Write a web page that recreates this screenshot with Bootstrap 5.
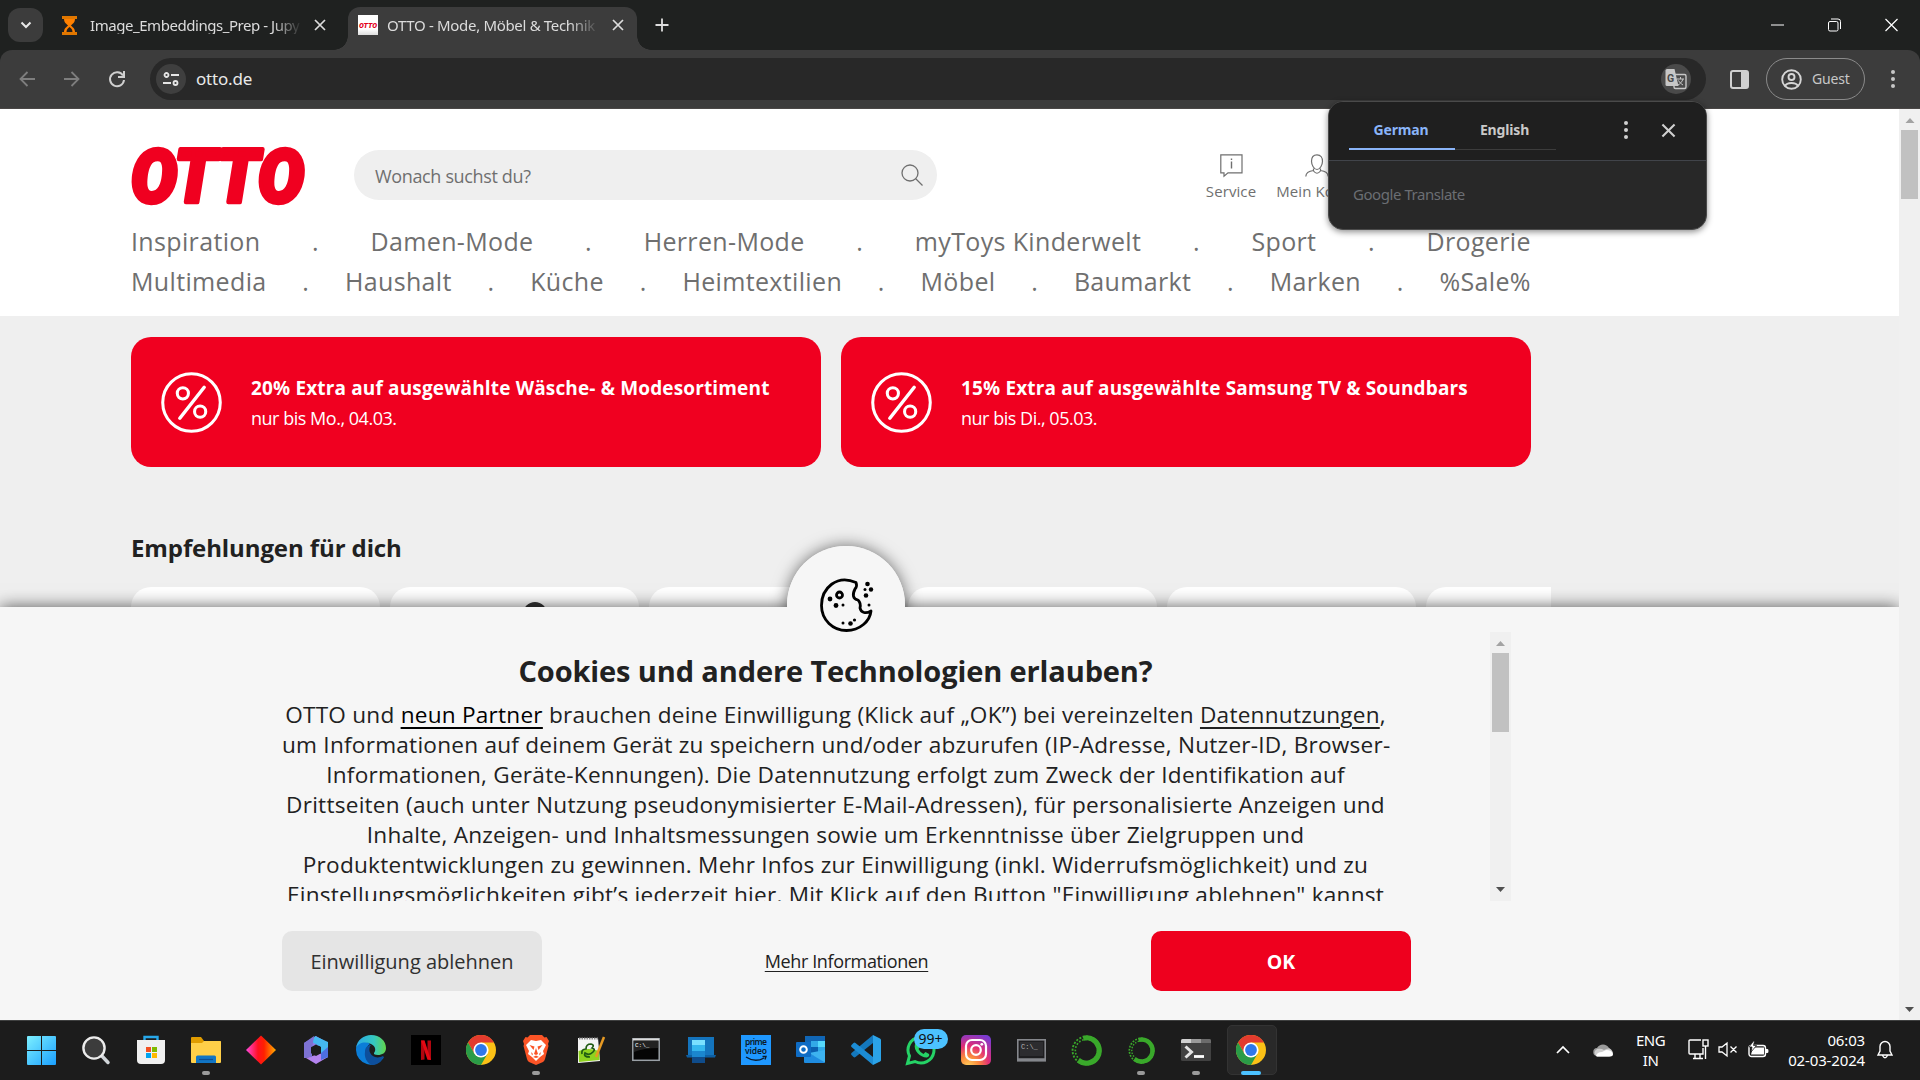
<!DOCTYPE html>
<html lang="de">
<head>
<meta charset="utf-8">
<title>OTTO - Mode, Möbel &amp; Technik</title>
<link href="https://cdn.jsdelivr.net/npm/bootstrap@5.3.0/dist/css/bootstrap.min.css" rel="stylesheet">
<style>
body{width:1920px;height:1080px;overflow:hidden;font-family:"Open Sans","Noto Sans",sans-serif;background:#efefef;color:#212121;line-height:1.2}
svg{display:block;flex:none;overflow:visible}
.ui{font-family:"Noto Sans","Open Sans",sans-serif}
/* browser frame */
.tabstrip{height:50px;background:#1f2120;padding-left:8px;color:#dcdcdc}
.tabsearch{width:35px;height:34px;border-radius:12px;background:#3c3c3c}
.tab-item{font-size:15px;letter-spacing:-.45px;white-space:nowrap}
.tab-idle{width:305px;padding:0 21px 0 18px}
.tab-idle .tab-title{margin-left:12px}
.tab-active{width:289px;height:43px;background:#3c3c3c;border-radius:12px 12px 0 0;align-self:flex-end;padding-left:10px}
.tab-active::before,.tab-active::after{content:"";position:absolute;bottom:0;width:14px;height:14px}
.tab-active::before{left:-14px;background:radial-gradient(circle at 0 0,transparent 13.5px,#3c3c3c 14px)}
.tab-active::after{right:-14px;background:radial-gradient(circle at 100% 0,transparent 13.5px,#3c3c3c 14px)}
.tab-title{width:212px;-webkit-mask-image:linear-gradient(90deg,#000 86%,transparent)}
.tab-active .tab-title{margin-left:9px;letter-spacing:-.32px}
.favicon{width:20px;height:20px;background:linear-gradient(#fff 70%,#ddd);flex:none}
.win-ctl{gap:44px;padding-right:22px}
.toolbar-wrap{height:59px;background:#1f2120}
.toolbar-row{height:59px;background:#3c3c3c;border-radius:12px 12px 0 0;border-bottom:1px solid #4a4746;padding:0 20px 0 18px;color:#c7c7c7}
.omnibox{width:1556px;height:42px;border-radius:21px;background:#282828;margin-left:24px;padding:0 15px 0 6px;font-size:17px;letter-spacing:-.2px;color:#e8e8e8}
.round-btn{width:30px;height:30px;border-radius:50%;background:#3f3f3f}
.guest{width:99px;height:42px;border:1px solid #8b8b8b;border-radius:21px;margin-left:17px;padding-left:14px;font-size:14px;letter-spacing:-.2px;gap:10px}
/* page */
.viewport{height:911px}
.site{width:1899px;height:911px;overflow:hidden}
.site-head{height:207px;background:#fff;color:#6f6f6f}
.wrap{width:1400px;margin-left:131px}
.head-top{height:105px;padding-top:37px}
.search-pill{width:583px;height:50px;border-radius:25px;background:#efefef;margin:4px 0 0 49px;padding:0 14px 0 21px;font-size:18px;letter-spacing:-.35px;color:#6f6f6f}
.head-links{margin-left:261px;font-size:15px;letter-spacing:.1px;gap:20px;padding-top:8px}
.head-link{width:66px;white-space:nowrap;text-align:center}
.nav-line{height:40px;font-size:25px;letter-spacing:.35px}
.promo{width:690px;height:130px;border-radius:20px;background:#f00020;color:#fff;padding-left:30px}
.promo-text{margin-left:29px;padding-top:1px}
.promo-title{font-size:19px;font-weight:700;letter-spacing:.15px;line-height:30px}
.promo-sub{font-size:18px;letter-spacing:-.48px;line-height:30px}
.reco-title{font-size:24px;font-weight:700;letter-spacing:-.1px;margin:65px 0 0;line-height:32px}
.reco-row{width:1420px;gap:10px;margin-top:23px;overflow:hidden}
.tile{width:249px;height:80px;border-radius:20px;background:#fff;flex:none}
.hat{position:absolute;left:133px;top:15px;width:24px;height:24px;border-radius:50%;background:#333}
.scroll-track{width:21px;background:#f0f0f0}
.scroll-thumb{width:17px;background:#c1c1c1}
/* consent layer */
.consent{position:absolute;left:0;top:498px;width:1899px;height:413px}
.consent-shade,.consent-face{position:absolute;inset:0}
.consent-shade{box-shadow:0 0 16px rgba(0,0,0,.65)}
.consent-face{background:#f6f6f6}
.bump{position:absolute;left:787px;top:-61px;width:118px;height:118px;border-radius:50%;background:#f6f6f6}
.bump-shade{box-shadow:0 0 16px rgba(0,0,0,.55)}
.consent-body{height:269px;margin:25px 0 0 282px;width:1229px;overflow:hidden}
.consent-text{width:1107px;font-size:22.6px;letter-spacing:.24px;line-height:30px;white-space:nowrap}
.consent-text h2{font-size:29px;font-weight:700;letter-spacing:-.12px;line-height:40px;margin:19px 0 9px}
.consent-text p{margin:0}
.consent-text a,.more-link{color:inherit;text-decoration:underline;text-underline-offset:4px;text-decoration-thickness:2px}
.consent-text a.partner{color:#000}
.consent-actions{width:1129px;margin:30px 0 0 282px}
.act{width:260px;height:60px;border:0;border-radius:10px;font-size:20px;padding-top:3px}
.act-no{background:#e5e5e5;color:#303030}
.act-ok{background:#ee001e;color:#fff;font-weight:700;font-size:19.5px}
.more-link{font-size:18px;letter-spacing:-.38px;text-decoration-thickness:1px;text-underline-offset:3px;padding-top:2px}
/* translate bubble */
.bubble{position:absolute;left:1328px;top:101px;width:379px;height:129px;border-radius:15px;background:#282828;border:1px solid #4a4a4a;color:#d0d0d0;overflow:hidden;box-shadow:0 2px 6px rgba(0,0,0,.45);z-index:5}
.bubble-head{height:59px;background:#1f1f1f;border-bottom:1px solid #41444a;padding-left:20px}
.lang{height:48px;font-size:14px;font-weight:700;letter-spacing:-.15px;color:#c9c9c9;border-bottom:1px solid #3c3c3c;padding:10px 2px 0 0}
.lang-on{color:#8ab4f8;border-bottom:2px solid #8ab4f8}
.gt{font-size:15px;letter-spacing:-.45px;color:#6b6e73;padding:24px 0 0 24px}
/* taskbar */
.taskbar{height:60px;background:#1c1c1c;border-top:1px solid #3f4040;padding-left:13.500px;color:#fff}
.app{width:55px;height:59px;position:relative;padding-bottom:1px}
.app::after{position:absolute;bottom:5px;left:50%;margin-left:-4px;width:8px;height:4px;border-radius:2px;background:#9a9a9a}
.app-run::after{content:""}
.app-on::before{content:"";position:absolute;inset:4px 2px 5px 3px;border-radius:5px;background:#292929;border:1px solid #333}
.app-on svg{position:relative}
.app-on::after{content:"";width:20px;margin-left:-10px;background:#4cc2ff}
.unread{position:absolute;left:20px;top:8px;width:34px;height:20px;border-radius:10px;background:#4cc2ff;color:#111;font-size:14px;line-height:20px;text-align:center}
.tray{font-size:15px;letter-spacing:-.15px;line-height:20px;padding:0 27px 2px 0}
</style>
<script src="https://cdn.jsdelivr.net/npm/bootstrap@5.3.0/dist/js/bootstrap.bundle.min.js"></script>
</head>
<body>
<svg width="0" height="0" class="position-absolute">
  <symbol id="x" viewBox="0 0 14 14"><path d="M2 2l10 10M12 2L2 12" stroke="currentColor" stroke-width="1.7" fill="none"/></symbol>
  <symbol id="dots" viewBox="0 0 6 20"><g fill="currentColor"><circle cx="3" cy="3" r="2"/><circle cx="3" cy="10" r="2"/><circle cx="3" cy="17" r="2"/></g></symbol>
  <symbol id="chrome" viewBox="0 0 30 30"><circle cx="15" cy="15" r="15" fill="#fbc116"/><path d="M2 7.5A15 15 0 0 1 28 7.5H15L8.5 18.7z" fill="#e33b2e"/><path d="M2 7.5A15 15 0 0 0 15 30l6.5-11.2L15 22l-6.5-3.3z" fill="#2a9c47"/><circle cx="15" cy="15" r="7.6" fill="#fff"/><circle cx="15" cy="15" r="5.9" fill="#2f78ea"/></symbol>
  <symbol id="percent" viewBox="0 0 60 60"><g fill="none" stroke="#fff" stroke-width="3"><circle cx="30" cy="30" r="28.3"/><path d="M42.5 15L18.500 45.500" stroke-width="3.400" stroke-linecap="round"/><circle cx="21.500" cy="21" r="5.500"/><circle cx="38.500" cy="39" r="5.500"/></g></symbol>
  <symbol id="ring" viewBox="0 0 30 30"><circle cx="15" cy="15" r="12.300" fill="none" stroke="#3aa92b" stroke-width="5" stroke-dasharray="50 28" transform="rotate(-105 15 15)"/><circle cx="15" cy="15" r="13.500" fill="none" stroke="#3aa92b" stroke-width="1.800" stroke-dasharray="2 1.500"/><circle cx="15" cy="15" r="10.800" fill="none" stroke="#3aa92b" stroke-width="1.600" stroke-dasharray="1.600 1.700"/></symbol>
</svg>

<header class="ui">
  <div class="tabstrip d-flex align-items-center">
    <div class="tabsearch d-flex align-items-center justify-content-center"><svg width="12" height="12" viewBox="0 0 12 12"><path d="M1.500 3.500L6 8l4.500-4.500" stroke="#e8e8e8" stroke-width="2" fill="none"/></svg></div>
    <div class="tab-item tab-idle d-flex align-items-center">
      <svg width="17" height="19" viewBox="0 0 17 19"><path d="M1 0h15v3H1zM1 16h15v3H1z" fill="#e07700"/><path d="M3 3h11c0 4-3 5-4 6.500C11 11 14 12 14 16H3c0-4 3-5 4-6.500C6 8 3 7 3 3z" fill="#ff8000"/><path d="M5.500 16c0-3 2-4 3-5 1 1 3 2 3 5z" fill="#26201a"/></svg>
      <span class="tab-title">Image_Embeddings_Prep - Jupy</span>
      <svg class="ms-auto" width="14" height="14"><use href="#x"/></svg>
    </div>
    <div class="tab-item tab-active position-relative d-flex align-items-center pb-2">
      <div class="favicon"><svg width="20" height="20" viewBox="0 0 20 20"><text x="1" y="13" font-family="Roboto" font-weight="900" font-style="italic" font-size="8" textLength="18" lengthAdjust="spacingAndGlyphs" fill="#e3001b" letter-spacing="0">OTTO</text></svg></div>
      <span class="tab-title">OTTO - Mode, Möbel &amp; Technik</span>
      <svg class="ms-auto me-2" width="14" height="14"><use href="#x"/></svg>
      <span class="pe-1"></span>
    </div>
    <svg class="ms-3" width="18" height="18" viewBox="0 0 18 18"><path d="M9 2.500v13M2.500 9h13" stroke="#ddd" stroke-width="1.800"/></svg>
    <div class="win-ctl d-flex align-items-center ms-auto">
      <svg width="13" height="14" viewBox="0 0 13 14"><path d="M0 7h13" stroke="#fff"/></svg>
      <svg width="13" height="14" viewBox="0 0 13 14" fill="none" stroke="#fff"><rect x=".5" y="3.500" width="9.500" height="9.500" rx="1.500"/><path d="M3 1h7q2.500 0 2.500 2.500V11"/></svg>
      <svg width="13" height="14" viewBox="0 0 13 14"><path d="M.5 1l12 12M12.500 1L.5 13" stroke="#fff" stroke-width="1.200"/></svg>
    </div>
  </div>
  <div class="toolbar-wrap">
    <div class="toolbar-row d-flex align-items-center">
      <svg width="18" height="18" viewBox="0 0 18 18" fill="none" stroke="#7e7e7e" stroke-width="1.800"><path d="M17 9H3M9.500 2L2.500 9l7 7"/></svg>
      <svg style="margin-left:27px" width="18" height="18" viewBox="0 0 18 18" fill="none" stroke="#7e7e7e" stroke-width="1.800"><path d="M1 9h14M8.500 2l7 7-7 7"/></svg>
      <svg style="margin-left:27px" width="18" height="18" viewBox="0 0 18 18" fill="none" stroke="#d0d0d0" stroke-width="2"><path d="M15 5.500A7 7 0 1 0 16 10"/><path d="M16 1v6h-6" /></svg>
      <div class="omnibox d-flex align-items-center">
        <div class="round-btn d-flex align-items-center justify-content-center"><svg width="16" height="14" viewBox="0 0 16 14" fill="none" stroke="#e6e6e6" stroke-width="1.800"><circle cx="3.500" cy="3" r="2"/><path d="M8 3h8M0 11h8"/><circle cx="12.500" cy="11" r="2"/></svg></div>
        <span style="margin-left:10px;padding-top:1px">otto.de</span>
        <div class="round-btn d-flex align-items-center justify-content-center ms-auto" style="background:#4a4a4a"><svg width="22" height="22" viewBox="0 0 22 22"><rect x="9" y="6.500" width="12" height="14" rx="1.500" fill="#4a4a4a" stroke="#c7c7c7" stroke-width="1.400"/><path d="M12 11h7M15.500 9v2M18 11c-1 3-3 5-5 6M13.500 12.500c1 2 3 3.500 4.500 4.500" stroke="#c7c7c7" fill="none"/><path d="M2 1h7.500l4 17H2Q.5 18 .5 16.500v-14Q.5 1 2 1z" fill="#c7c7c7"/><text x="2" y="14" font-size="10.500" font-weight="700" fill="#4a4a4a" font-family="Roboto">G</text></svg></div>
      </div>
      <svg style="margin-left:24px" width="19" height="19" viewBox="0 0 19 19"><rect x="1" y="1" width="17" height="17" rx="2" fill="none" stroke="#d0d0d0" stroke-width="2"/><path d="M11 1h7v17h-7z" fill="#d0d0d0"/></svg>
      <div class="guest d-flex align-items-center">
        <svg width="21" height="21" viewBox="0 0 21 21" fill="none" stroke="#d5d5d5" stroke-width="1.900"><circle cx="10.500" cy="10.500" r="9.300"/><circle cx="10.500" cy="8" r="3"/><path d="M4 17c2-4 11-4 13 0"/></svg>
        <span>Guest</span>
      </div>
      <svg class="ms-auto me-1" width="6" height="20"><use href="#dots"/></svg>
    </div>
  </div>
</header>

<section class="bubble ui">
  <div class="bubble-head d-flex">
    <div class="lang lang-on d-flex align-items-center justify-content-center" style="width:106px">German</div>
    <div class="lang d-flex align-items-center justify-content-center" style="width:101px">English</div>
    <svg style="margin:18px 0 0 67px" width="6" height="20"><use href="#dots"/></svg>
    <svg style="margin:20px 0 0 31px" width="17" height="17"><use href="#x"/></svg>
  </div>
  <div class="gt">Google Translate</div>
</section>

<main class="viewport d-flex position-relative">
  <div class="site position-relative">
    <div class="site-head">
      <div class="wrap">
        <div class="head-top d-flex align-items-start">
          <svg width="174" height="60" viewBox="0 0 174 60"><text x="0" y="56" font-family="Roboto" font-weight="900" font-style="italic" font-size="74" textLength="173" lengthAdjust="spacingAndGlyphs" fill="#f00020" stroke="#f00020" stroke-width="4.500" stroke-linejoin="round">OTTO</text></svg>
          <div class="search-pill d-flex align-items-center justify-content-between"><span class="pt-1">Wonach suchst du?</span>
            <svg width="22" height="22" viewBox="0 0 22 22" fill="none" stroke="#6f6f6f" stroke-width="1.300"><circle cx="9" cy="9" r="8"/><path d="M14.500 14.500l7 7"/></svg>
          </div>
          <div class="head-links d-flex">
            <div class="head-link d-flex flex-column align-items-center"><svg width="23" height="23" viewBox="0 0 23 23" fill="none" stroke="#6f6f6f"><path d="M.8.800h21.200v18H8l-4 3.500v-3.500H.8z" stroke-width="1.200"/><path d="M11.500 7.500v7M11.500 4.500v1.500" stroke-width="1.400"/></svg><span style="margin-top:5px">Service</span></div>
            <div class="head-link d-flex flex-column align-items-center"><svg width="24" height="23" viewBox="0 0 24 23" fill="none" stroke="#6f6f6f" stroke-width="1.200"><path d="M12 .8c-4 0-5.500 3-5.500 6.500S9 15.500 12 15.500s5.500-4.700 5.500-8.200S16 .8 12 .8z"/><path d="M8.500 14.500v2.500q3.500 4.500 7 0v-2.500M8.500 16.500C4 17 1 18.500.8 22.500M15.500 16.500c4.500.5 7.500 2 7.700 6"/></svg><span style="margin-top:5px">Mein Konto</span></div>
          </div>
        </div>
        <div class="nav-line d-flex align-items-center justify-content-between" style="margin-top:7px"><span>Inspiration</span><span>.</span><span>Damen-Mode</span><span>.</span><span>Herren-Mode</span><span>.</span><span>myToys Kinderwelt</span><span>.</span><span>Sport</span><span>.</span><span>Drogerie</span></div>
        <div class="nav-line d-flex align-items-center justify-content-between"><span>Multimedia</span><span>.</span><span>Haushalt</span><span>.</span><span>Küche</span><span>.</span><span>Heimtextilien</span><span>.</span><span>Möbel</span><span>.</span><span>Baumarkt</span><span>.</span><span>Marken</span><span>.</span><span>%Sale%</span></div>
      </div>
    </div>
    <div class="wrap">
      <div class="d-flex" style="gap:20px;padding-top:21px">
        <div class="promo d-flex align-items-center"><svg width="61" height="61"><use href="#percent"/></svg><div class="promo-text"><div class="promo-title">20% Extra auf ausgewählte Wäsche- &amp; Modesortiment</div><div class="promo-sub">nur bis Mo., 04.03.</div></div></div>
        <div class="promo d-flex align-items-center"><svg width="61" height="61"><use href="#percent"/></svg><div class="promo-text"><div class="promo-title">15% Extra auf ausgewählte Samsung TV &amp; Soundbars</div><div class="promo-sub">nur bis Di., 05.03.</div></div></div>
      </div>
      <h1 class="reco-title">Empfehlungen für dich</h1>
      <div class="reco-row d-flex"><div class="tile"></div><div class="tile position-relative"><div class="hat"></div></div><div class="tile"></div><div class="tile"></div><div class="tile"></div><div class="tile"></div></div>
    </div>
    <div class="consent">
      <div class="consent-shade"></div><div class="bump bump-shade"></div>
      <div class="consent-face"></div><div class="bump"></div>
      <svg class="position-absolute" style="left:819px;top:-30px" width="55" height="56" viewBox="0 0 55 56" fill="none" stroke="#000" stroke-width="2.800" stroke-linejoin="round" stroke-linecap="round"><path d="M37 5.500C18-3 2.500 11 2.500 28.500 2.500 43 14 53.500 27.500 53.500 41 53.500 51 44 52 34c-5 3-10 2-11-3 1-4 0-6-2-8-5-1-6-5-3-11 2-2 2-4 1-6.500z"/><circle cx="20.500" cy="18" r="3"/><g fill="#000" stroke="none"><circle cx="11" cy="22" r="2.400"/><circle cx="17" cy="28.500" r="2.400"/><circle cx="24" cy="28" r="1.500"/><circle cx="24" cy="46" r="1.500"/><circle cx="31.500" cy="46.500" r="2.300"/><circle cx="35.500" cy="43" r="1.600"/><circle cx="48.500" cy="7" r="2.300"/><circle cx="46" cy="12.500" r="1.500"/><circle cx="52" cy="12.500" r="2.200"/><circle cx="47" cy="18.500" r="2.300"/><circle cx="50" cy="28" r="1.500"/></g></svg>
      <div class="position-relative">
        <div class="consent-body d-flex justify-content-between">
          <div class="consent-text text-center">
            <h2>Cookies und andere Technologien erlauben?</h2>
            <p>OTTO und <a class="partner" href="#">neun Partner</a> brauchen deine Einwilligung (Klick auf „OK”) bei vereinzelten <a href="#">Datennutzungen</a>,<br>um Informationen auf deinem Gerät zu speichern und/oder abzurufen (IP-Adresse, Nutzer-ID, Browser-<br>Informationen, Geräte-Kennungen). Die Datennutzung erfolgt zum Zweck der Identifikation auf<br>Drittseiten (auch unter Nutzung pseudonymisierter E-Mail-Adressen), für personalisierte Anzeigen und<br>Inhalte, Anzeigen- und Inhaltsmessungen sowie um Erkenntnisse über Zielgruppen und<br>Produktentwicklungen zu gewinnen. Mehr Infos zur Einwilligung (inkl. Widerrufsmöglichkeit) und zu<br>Einstellungsmöglichkeiten gibt’s jederzeit hier. Mit Klick auf den Button "Einwilligung ablehnen" kannst</p>
          </div>
          <div class="scroll-track d-flex flex-column align-items-center"><svg class="mt-2" width="9" height="6" viewBox="0 0 9 6"><path d="M0 6l4.500-5L9 6z" fill="#a3a3a3"/></svg><div class="scroll-thumb" style="height:79px;margin-top:7px"></div><svg class="mt-auto mb-2" width="9" height="6" viewBox="0 0 9 6"><path d="M0 0l4.500 5L9 0z" fill="#505050"/></svg></div>
        </div>
        <div class="consent-actions d-flex justify-content-between align-items-center">
          <button class="act act-no">Einwilligung ablehnen</button><a class="more-link" href="#">Mehr Informationen</a><button class="act act-ok">OK</button>
        </div>
      </div>
    </div>
  </div>
  <div class="scroll-track d-flex flex-column align-items-center"><svg class="mt-2" width="10" height="6" viewBox="0 0 9 6"><path d="M0 6l4.500-5L9 6z" fill="#a3a3a3"/></svg><div class="scroll-thumb" style="height:69px;margin-top:7px"></div><svg class="mt-auto" style="margin-bottom:7px" width="9" height="6" viewBox="0 0 9 6"><path d="M0 0l4.500 5L9 0z" fill="#505050"/></svg></div>
</main>

<footer class="taskbar ui d-flex align-items-center">
  <div class="app d-flex align-items-center justify-content-center"><svg width="29" height="29" viewBox="0 0 29 29"><defs><linearGradient id="w" x2="1" y2="1"><stop stop-color="#7df0ff"/><stop offset="1" stop-color="#1a9fff"/></linearGradient></defs><path d="M0 1q0-1 1-1h13v14H0zM15 0h13q1 0 1 1v13H15zM0 15h14v14H1q-1 0-1-1zM15 15h14v13q0 1-1 1H15z" fill="url(#w)"/></svg></div>
  <div class="app d-flex align-items-center justify-content-center"><svg width="28" height="30" viewBox="0 0 28 30"><path d="M19 20l7 7.500" stroke="#d0d4d8" stroke-width="3.500" stroke-linecap="round"/><circle cx="12" cy="13" r="10.600" fill="#3c3c3c" stroke="#ececec" stroke-width="2.400"/></svg></div>
  <div class="app d-flex align-items-center justify-content-center"><svg width="30" height="30" viewBox="0 0 30 30"><path d="M8.500 6V2h13v4" fill="none" stroke="#27a8ea" stroke-width="2.400"/><path d="M1 5h28v20q0 4-4 4H5q-4 0-4-4z" fill="#f0f0f0"/><path d="M10 12h5v5h-5z" fill="#f25022"/><path d="M16 12h5v5h-5z" fill="#7fba00"/><path d="M10 18h5v5h-5z" fill="#00a4ef"/><path d="M16 18h5v5h-5z" fill="#ffb900"/></svg></div>
  <div class="app app-run d-flex align-items-center justify-content-center"><svg width="30" height="28" viewBox="0 0 30 28"><path d="M0 2q0-1 1-1h9l3 4h16q1 0 1 1v6H0z" fill="#e09c00"/><path d="M0 7h11l2-2h16q1 0 1 1v20q0 1-1 1H1q-1 0-1-1z" fill="#ffcf48"/><path d="M5 27v-6q0-1.500 1.500-1.500h17Q25 19.500 25 21v6z" fill="#1175c4"/><path d="M8 23.500h14" stroke="#0c4e94" stroke-width="1.200"/></svg></div>
  <div class="app d-flex align-items-center justify-content-center"><svg width="30" height="30" viewBox="0 0 30 30"><defs><linearGradient id="d"><stop stop-color="#ff4ae0"/><stop offset=".4" stop-color="#ff1020"/><stop offset=".6" stop-color="#ff2000"/><stop offset="1" stop-color="#ffb000"/></linearGradient></defs><path d="M15 .5L30 15 15 29.500 0 15z" fill="url(#d)"/></svg></div>
  <div class="app d-flex align-items-center justify-content-center"><svg width="28" height="30" viewBox="0 0 28 30"><path d="M14 1l12 7-2 6-6-4-8 4v8L2 23V8z" fill="#8f7be8"/><path d="M13 1l13 6v15l-7 3V12l-9-5z" fill="#45b9f2"/><path d="M26 14v8l-12 7-10-6 16-5z" fill="#b483ee"/><path d="M2 8L12 1l-2 13v8l-8 1z" fill="#7d72d4"/><path d="M26 12v10l-7 3v-7z" fill="#4d6fe0"/><path d="M14 9.500l5 2.700v6L14 21l-5-2.800v-6z" fill="#1c1c1c"/></svg></div>
  <div class="app d-flex align-items-center justify-content-center"><svg width="30" height="30" viewBox="0 0 30 30"><defs><linearGradient id="e"><stop stop-color="#2aa9e8"/><stop offset=".6" stop-color="#35c8c0"/><stop offset="1" stop-color="#62d64a"/></linearGradient></defs><path d="M0 15C0 5 9 4 14 9c-4 2-5 9-1 12 4 3 9 3 13 1 1 0 2 0 1.500 1A15 15 0 0 1 0 15z" fill="#0b7dd8"/><path d="M9 17c0-5 3-7 6-7-3 3-2 10 4 12 3 1 6 0 8-1 .8.500.8 1 .4 1.700C24 28 20 30 15.500 30 11 28 8 22 9 17z" fill="#0d4f9c"/><path d="M0 13C1 5 8 0 15 0c9 0 15 6 15 13 0 5-4 7-8 7-3 0-4.500-1-4-2 2-2 2-7-3-9C9 6 2 8 0 13z" fill="url(#e)"/></svg></div>
  <div class="app d-flex align-items-center justify-content-center"><svg width="30" height="30" viewBox="0 0 30 30"><path d="M0 0h30v30H0z" fill="#000"/><path d="M10 5.500h3.500v19L10 25zM16.500 5.500H20V25l-3.500-.5z" fill="#b1060f"/><path d="M10 5.500h3.500L20 25l-3.600-.5z" fill="#e50914"/></svg></div>
  <div class="app d-flex align-items-center justify-content-center"><svg width="30" height="30"><use href="#chrome"/></svg></div>
  <div class="app app-run d-flex align-items-center justify-content-center"><svg width="26" height="30" viewBox="0 0 26 30"><path d="M7 0h12l2.500 2.500 2-.5L26 6l-1 3 .5 2L22 24q-.5 2-2 3l-7 3-7-3q-1.500-1-2-3L.5 11 1 9 0 6l2.500-4 2 .5z" fill="#fb5426"/><path d="M8 5l5 1 5-1 5 5-3 6 1 3-4 3-4 4-4-4-4-3 1-3-3-6z" fill="#fff"/><path d="M6.500 10l5 1.500-1 3.500zM19.500 10l-5 1.500 1 3.500zM13 13l2 6-2 1-2-1zM8 17l2 2-1 1.500zM18 17l-2 2 1 1.500zM10 22l3-1.500 3 1.500-3 1z" fill="#fb5426"/></svg></div>
  <div class="app d-flex align-items-center justify-content-center"><svg width="28" height="28" viewBox="0 0 28 28"><path d="M1 2h20l2 23L1 27z" fill="#f4f4f4"/><path d="M1.500 15q10-4 20.500 0l.6 9L2 26z" fill="#8fd31f"/><path d="M2 2.500h19" stroke="#888" stroke-width="2" stroke-dasharray="1.500 1"/><path d="M5 18q-1-5 4-5 0-5 5-5 4 1 1 4 4 1 1 4-4 4-8 1-2 4 5 4" fill="none" stroke="#1f5a13" stroke-width="1.700"/><path d="M27 1L19 21" stroke="#e79a23" stroke-width="2.500"/></svg></div>
  <div class="app d-flex align-items-center justify-content-center"><svg width="28" height="24" viewBox="0 0 28 24"><rect x=".8" y=".8" width="26.400" height="21.500" fill="#050505" stroke="#9aa0a6" stroke-width="1.500"/><path d="M1 1.500h26" stroke="#ddd" stroke-width="2"/><path d="M2 3h24v7Q12 10 2 14z" fill="#222"/><text x="3" y="9" font-size="6" font-family="Liberation Mono" fill="#fff" letter-spacing="0">C:\_</text></svg></div>
  <div class="app d-flex align-items-center justify-content-center"><svg width="30" height="28" viewBox="0 0 30 28"><path d="M2 1h26v20H2z" fill="#1474bd"/><path d="M0 19h30l-1 2.500H1z" fill="#0d5fa3"/><path d="M6 4h13v23H6z" fill="#0f4c8b"/><path d="M6 4h13v5H6z" fill="#7ae0ff"/><path d="M6 9h13v6H6z" fill="#35b7ee"/><path d="M6 15h13v6H6z" fill="#1b87cf"/></svg></div>
  <div class="app d-flex align-items-center justify-content-center"><svg width="30" height="30" viewBox="0 0 30 30"><path d="M0 0h30v30H0z" fill="#1f98ff"/><g font-family="Noto Sans" font-weight="600" font-size="8.500" fill="#0b1b2c" letter-spacing="0"><text x="4" y="10" textLength="22">prime</text><text x="4" y="19" textLength="22">video</text></g><path d="M5 22q9 6 18 1M21.500 21.500h3.500l-1 3" fill="none" stroke="#0b1b2c" stroke-width="1.400"/></svg></div>
  <div class="app d-flex align-items-center justify-content-center"><svg width="30" height="28" viewBox="0 0 30 28"><path d="M9 0h20v14H9z" fill="#1066b5"/><path d="M15 5h7v6h-7z" fill="#32a9e7"/><path d="M22 5h7v6h-7z" fill="#55d9fc"/><path d="M15 11h7v6h-7z" fill="#0a5fb0"/><path d="M22 11h7v5h-7z" fill="#2fa8e6"/><path d="M8 14l11 6 10-6v12q0 1-1 1H9q-1 0-1-1z" fill="#1f8ce0"/><path d="M29 14v12.500L13 17z" fill="#3db3f0"/><rect x="0" y="6" width="15" height="15" rx="1" fill="#0f6cc4"/><circle cx="7.500" cy="13.500" r="3.300" fill="none" stroke="#fff" stroke-width="2"/></svg></div>
  <div class="app d-flex align-items-center justify-content-center"><svg width="30" height="30" viewBox="0 0 30 30"><path d="M22 0l7 3.500q1 .5 1 1.500v20q0 1-1 1.500L22 30z" fill="#2ba3e8"/><path d="M22 0v8L4.500 22q-1 .8-2 0l-2-2q-1-1 0-2z" fill="#1478bd"/><path d="M22 30v-8L4.500 8q-1-.8-2 0l-2 2q-1 1 0 2z" fill="#1c8cd4"/></svg></div>
  <div class="app d-flex align-items-center justify-content-center"><svg width="30" height="30" viewBox="0 0 30 30"><path d="M1.500 28.500l2-7.500A13 13 0 1 1 9 26.500z" fill="none" stroke="#25d366" stroke-width="3"/><path d="M9 9q2-3 4 0l1 3-1.500 2q2 4 5 5l2-2 3.500 2q1 2-2 3.500C15 23 7 16 9 9z" fill="#25d366"/></svg><span class="unread">99+</span></div>
  <div class="app d-flex align-items-center justify-content-center"><svg width="30" height="30" viewBox="0 0 30 30"><defs><radialGradient id="i" cx=".25" cy="1.050" r="1.150"><stop stop-color="#ffd15c"/><stop offset=".3" stop-color="#fb8a3c"/><stop offset=".6" stop-color="#e22e76"/><stop offset="1" stop-color="#7a3bd2"/></radialGradient></defs><rect width="30" height="30" rx="5" fill="url(#i)"/><g fill="none" stroke="#fff" stroke-width="2.200"><rect x="5" y="5" width="20" height="20" rx="6"/><circle cx="15" cy="15" r="4.800"/></g><circle cx="20.800" cy="9.300" r="1.400" fill="#fff"/></svg></div>
  <div class="app d-flex align-items-center justify-content-center"><svg width="29" height="23" viewBox="0 0 29 23"><rect x=".8" y=".8" width="27.400" height="21" fill="#1d1d1f" stroke="#85878c" stroke-width="1.600"/><path d="M3 3h23v14H3z" fill="#2c2c2f"/><path d="M1 20.500h27" stroke="#85878c" stroke-width="2.500"/><text x="4" y="10" font-size="7" font-family="Liberation Mono" fill="#b5b5b5" letter-spacing="0">C:\_</text></svg></div>
  <div class="app d-flex align-items-center justify-content-center"><svg width="31" height="31"><use href="#ring"/></svg></div>
  <div class="app app-run d-flex align-items-center justify-content-center"><svg width="27" height="27"><use href="#ring"/></svg></div>
  <div class="app app-run d-flex align-items-center justify-content-center"><svg width="30" height="22" viewBox="0 0 30 22"><rect width="30" height="22" rx="1.500" fill="#414141"/><path d="M0 4V1.500Q0 0 1.500 0H10v4z" fill="#d0d0d0"/><path d="M10 0h10v4H10z" fill="#9a9a9a"/><path d="M20 0h8.500Q30 0 30 1.500V4H20z" fill="#6b6b6b"/><path d="M4.500 7.500l6 5.500-6 5.500" fill="none" stroke="#e4e4e4" stroke-width="3"/><path d="M13 17.500h10" stroke="#fff" stroke-width="2.800"/></svg></div>
  <div class="app app-on d-flex align-items-center justify-content-center"><svg width="30" height="30"><use href="#chrome"/></svg></div>

  <div class="tray d-flex align-items-center ms-auto">
    <svg width="14" height="9" viewBox="0 0 14 9"><path d="M1 8l6-6 6 6" fill="none" stroke="#fff" stroke-width="1.700"/></svg>
    <svg style="margin-left:23px" width="20" height="14" viewBox="0 0 20 14"><path d="M4.500 13A4 4 0 0 1 4 5 7 7 0 0 1 16 5z" fill="#9b9b9b"/><path d="M4 13.500q-5-4 0-7.500 4-1 7 1l5-2q5 3 3.500 6.500Q18.500 13.500 16 13.500z" fill="#cfcfcf"/><path d="M3 13q1-4 6-4l4-2q6 0 7 4 0 2.500-3 2.500H4z" fill="#fff"/></svg>
    <div class="text-center" style="margin-left:23px;letter-spacing:-.5px">ENG<br>IN</div>
    <svg style="margin-left:23px" width="21" height="21" viewBox="0 0 21 21" fill="none" stroke="#fff" stroke-width="1.400"><path d="M13 1H2Q1 1 1 2v12q0 1 1 1h13V9M5 19.500h10M7 15v4M12 15v4"/><rect x="15" y="1" width="5" height="6"/><path d="M17.500 7v13"/></svg>
    <svg style="margin-left:9px" width="20" height="15" viewBox="0 0 20 15" fill="none" stroke="#fff" stroke-width="1.300"><path d="M1 5h3l5-4v13l-5-4H1zM12.500 4.500l6 6M18.500 4.500l-6 6"/></svg>
    <svg style="margin-left:10px" width="21" height="17" viewBox="0 0 21 17"><rect x="1" y="4.500" width="16.500" height="11" rx="2.500" fill="none" stroke="#fff" stroke-width="1.400"/><path d="M5 6.500h11v7H3z" fill="#fff"/><path d="M18 8h1.500q1 0 1 2t-1 2H18z" fill="#fff"/><path d="M5.500 0L1 6h3l-1 5 5.500-6.500h-3l1-4.500z" fill="#fff" stroke="#1c1c1c" stroke-width=".8"/></svg>
    <div class="text-end" style="margin-left:19px">06:03<br>02-03-2024</div>
    <svg style="margin-left:12px" width="16" height="19" viewBox="0 0 16 19" fill="none" stroke="#fff" stroke-width="1.400"><path d="M1 15l2-4V6.500a5 5 0 0 1 10 0V11l2 4zM5.500 15.500q2.500 4.500 5 0"/></svg>
  </div>
</footer>
</body>
</html>
